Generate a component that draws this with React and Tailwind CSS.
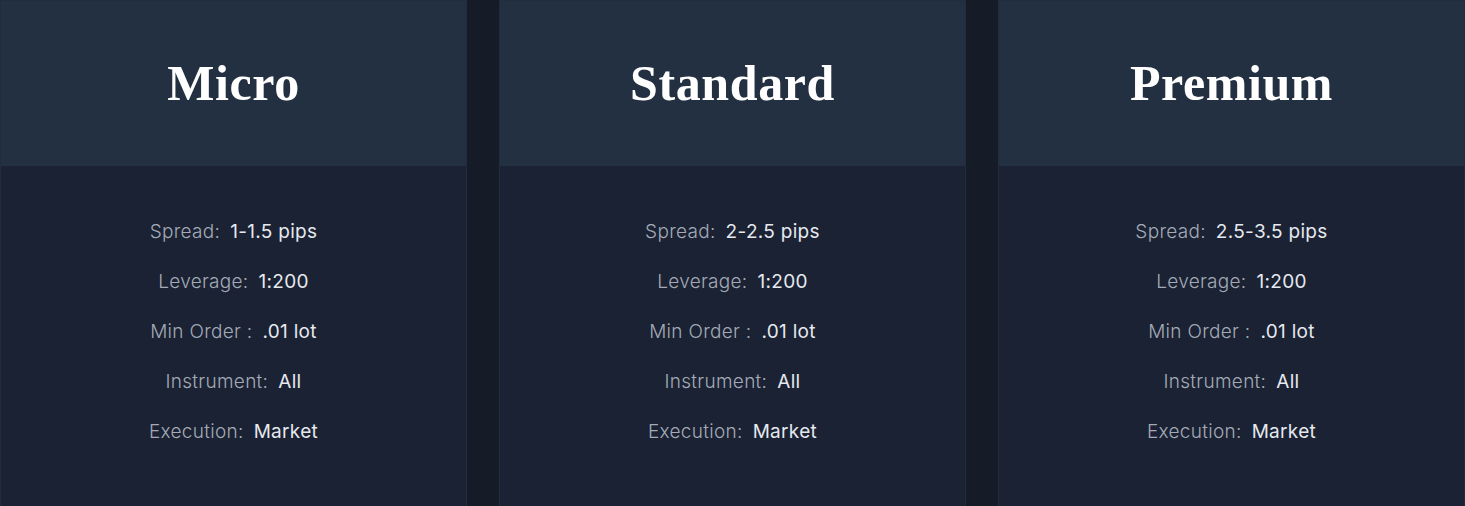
import React from "react";

const plans = [
  { name: "Micro", spread: "1-1.5 pips" },
  { name: "Standard", spread: "2-2.5 pips" },
  { name: "Premium", spread: "2.5-3.5 pips" },
];

function Row({ label, value }) {
  return (
    <div className="h-[50px] flex items-center justify-center">
      <span className="font-light text-[#a4abb6]">{label}</span>
      <span className="ml-[10px] text-[#e6e9ee]">{value}</span>
    </div>
  );
}

export default function App() {
  return (
    <div className="w-[1465px] h-[506px] overflow-hidden bg-[#151b27] grid grid-cols-3 gap-8">
      {plans.map((p) => (
        <div key={p.name} className="flex flex-col border border-[#222c3b] bg-[#1a2234] h-[540px]">
          <div className="h-[165px] bg-[#233041] flex items-center justify-center">
            <h2
              className="text-white text-[50px] font-bold tracking-[0.6px]"
              style={{ fontFamily: '"Liberation Serif", "DejaVu Serif", serif' }}
            >
              {p.name}
            </h2>
          </div>
          <div
            className="pt-[41px] text-[19px] tracking-[0.3px]"
            style={{ fontFamily: 'Inter, "Noto Sans", sans-serif' }}
          >
            <Row label="Spread:" value={p.spread} />
            <Row label="Leverage:" value="1:200" />
            <Row label="Min Order :" value=".01 lot" />
            <Row label="Instrument:" value="All" />
            <Row label="Execution:" value="Market" />
          </div>
        </div>
      ))}
    </div>
  );
}
